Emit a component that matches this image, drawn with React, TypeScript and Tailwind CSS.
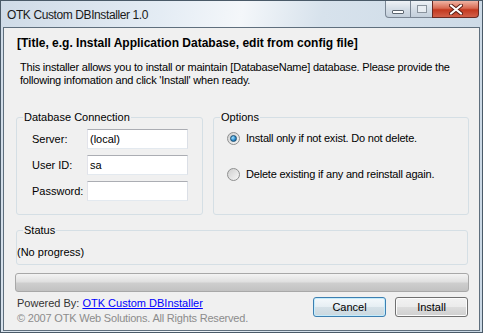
import { useState } from 'react';

type RadioProps = {
    checked: boolean;
    label: string;
    onSelect: () => void;
};

function VistaRadio({ checked, label, onSelect }: RadioProps) {
    return (
        <button type="button" onClick={onSelect} className="flex items-center gap-[6px] text-left">
            <span className="flex h-[13px] w-[13px] items-center justify-center rounded-full border border-[#8e8f8f] bg-[linear-gradient(135deg,#cfcfcf,#f7f7f7)]">
                {checked && (
                    <span className="h-[7px] w-[7px] rounded-full border border-[#1b4f72] bg-[radial-gradient(circle_at_35%_35%,#a9e3ff,#2c8ccd_55%,#0d4f87)]" />
                )}
            </span>
            <span className="tracking-[-0.2px]">{label}</span>
        </button>
    );
}

function TextBox({ value }: { value: string }) {
    return (
        <input
            defaultValue={value}
            className="h-[20px] w-[101px] border border-[#abadb3] border-b-[#e3e9ef] border-l-[#e2e3ea] border-r-[#dbdfe6] bg-white px-[2px] text-[11px] text-black outline-none"
        />
    );
}

export default function App() {
    const [mode, setMode] = useState<'keep' | 'reinstall'>('keep');

    return (
        <div
            className="flex h-[333px] w-[483px] flex-col overflow-hidden border border-[#4a5a68] bg-[linear-gradient(100deg,#cfdbe7_0%,#e4ecf4_30%,#f4f7fa_45%,#d7e2ec_60%,#cad8e5_100%)] px-[2px] pb-[1px] text-black"
            style={{ fontFamily: '"Liberation Sans", Arial, sans-serif' }}
        >
            {/* Title bar */}
            <div className="flex h-[26px] shrink-0 items-start justify-between">
                <span className="mt-[7px] pl-[4px] text-[12px] leading-[14px] tracking-[-0.4px] text-[#1a1a1a]">
                    OTK Custom DBInstaller 1.0
                </span>
                <div className="flex h-[17px] pr-[1px]">
                    <div className="flex w-[26px] items-end justify-center rounded-bl-[4px] border border-t-0 border-[#7a8694] bg-[linear-gradient(#eef2f6,#d4dde6_50%,#c3cfdb)] pb-[3px]">
                        <span className="h-[4px] w-[12px] rounded-[1px] border border-[#5c6670] bg-white" />
                    </div>
                    <div className="flex w-[21px] items-center justify-center border-b border-[#7a8694] bg-[linear-gradient(#eef2f6,#d4dde6_50%,#c3cfdb)]">
                        <span className="h-[8px] w-[10px] border border-[#8a949e] bg-[#e8edf2]" />
                    </div>
                    <div className="flex w-[47px] items-center justify-center rounded-br-[4px] border border-t-0 border-[#6b2a22] bg-[linear-gradient(#f0b4a4,#d86a52_45%,#c3391f_55%,#d2604a)]">
                        <svg width="14" height="11" viewBox="0 0 14 11">
                            <path d="M2 1.5 L12 9.5 M12 1.5 L2 9.5" stroke="#5a1d14" strokeWidth="4" strokeLinecap="round" />
                            <path d="M2 1.5 L12 9.5 M12 1.5 L2 9.5" stroke="#ffffff" strokeWidth="2.2" strokeLinecap="round" />
                        </svg>
                    </div>
                </div>
            </div>

            {/* Client area */}
            <div className="flex flex-1 flex-col border border-[#5f6f7d] bg-[#f0f0f0] text-[11px] leading-[13px]">
                <h1 className="mt-[8px] pl-[13px] text-[12px] font-bold leading-[14px]">
                    [Title, e.g. Install Application Database, edit from config file]
                </h1>
                <p className="mt-[11px] pl-[16px] tracking-[-0.2px]">
                    This installer allows you to install or maintain [DatabaseName] database. Please provide the
                    <br />
                    following infomation and click 'Install' when ready.
                </p>

                <div className="mt-[24px] flex gap-[10px] pl-[12px]">
                    <fieldset className="h-[104px] w-[187px] rounded-[3px] border border-[#d5dfe5]">
                        <legend className="ml-[6px] px-[1px]">Database Connection</legend>
                        <div className="flex flex-col gap-[6px] pl-[15px] pt-[5px]">
                            {[
                                ['Server:', '(local)'],
                                ['User ID:', 'sa'],
                                ['Password:', ''],
                            ].map(([label, value]) => (
                                <div key={label} className="flex items-center">
                                    <span className="w-[55px]">{label}</span>
                                    <TextBox value={value} />
                                </div>
                            ))}
                        </div>
                    </fieldset>

                    <fieldset className="h-[104px] w-[256px] rounded-[3px] border border-[#d5dfe5]">
                        <legend className="ml-[6px] px-[1px]">Options</legend>
                        <div className="flex flex-col gap-[23px] pl-[13px] pt-[8px]">
                            <VistaRadio
                                checked={mode === 'keep'}
                                label="Install only if not exist. Do not delete."
                                onSelect={() => setMode('keep')}
                            />
                            <VistaRadio
                                checked={mode === 'reinstall'}
                                label="Delete existing if any and reinstall again."
                                onSelect={() => setMode('reinstall')}
                            />
                        </div>
                    </fieldset>
                </div>

                <fieldset className="ml-[12px] mt-[9px] h-[41px] w-[452px] rounded-[3px] border border-[#d5dfe5]">
                    <legend className="ml-[6px] px-[1px]">Status</legend>
                    <div className="pt-[9px]">(No progress)</div>
                </fieldset>

                {/* Progress bar */}
                <div className="ml-[11px] mt-[8px] h-[19px] w-[454px] rounded-[3px] border border-[#a8a8a8] bg-[linear-gradient(#f4f4f4,#e0e0e0_45%,#cdcdcd_55%,#c2c2c2)]" />

                {/* Footer */}
                <div className="mt-[4px] flex items-start justify-between pl-[13px] pr-[11px]">
                    <div className="mt-[1px] flex flex-col gap-[2px]">
                        <span className="text-[#333]">
                            Powered By:{' '}
                            <a href="#" className="text-[#0000ff] underline">
                                OTK Custom DBInstaller
                            </a>
                        </span>
                        <span className="tracking-[-0.2px] text-[#8c8c8c]">
                            © 2007 OTK Web Solutions. All Rights Reserved.
                        </span>
                    </div>
                    <div className="mt-[1px] flex gap-[9px]">
                        <button className="h-[20px] w-[73px] rounded-[3px] border border-[#3c7fb1] bg-[linear-gradient(#f4f9fc,#e6eef3_50%,#d5e1e8_50%,#cbd8df)] shadow-[inset_0_0_0_1px_#c5ecfc]">
                            Cancel
                        </button>
                        <button className="h-[20px] w-[73px] rounded-[3px] border border-[#707070] bg-[linear-gradient(#f2f2f2,#ebebeb_50%,#dddddd_50%,#cfcfcf)] shadow-[inset_0_0_0_1px_#fcfcfc]">
                            Install
                        </button>
                    </div>
                </div>
            </div>
        </div>
    );
}
